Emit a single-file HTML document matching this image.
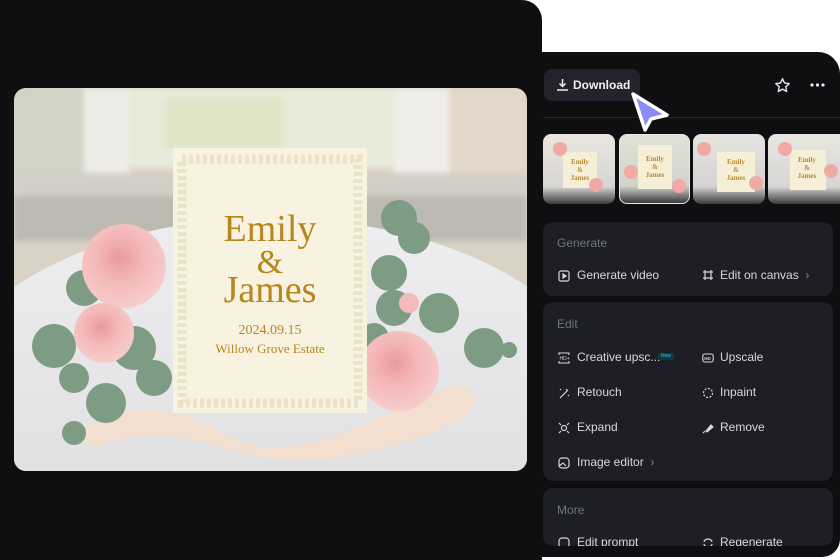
<!DOCTYPE html>
<html><head><meta charset="utf-8"><style>
*{margin:0;padding:0;box-sizing:border-box}
html,body{width:840px;height:560px;overflow:hidden}
body{background:#fff;position:relative;font-family:"Liberation Sans",sans-serif}
.left{position:absolute;left:0;top:0;width:542px;height:560px;background:#0f0f12;border-top-right-radius:20px}
.right{position:absolute;left:530px;top:52px;width:310px;height:505px;background:#0f0f12;border-top-right-radius:22px;border-bottom-right-radius:18px}
.photo{position:absolute;left:14px;top:88px;width:513px;height:383px;border-radius:12px;overflow:hidden}
.dl{position:absolute;left:544px;top:69px;width:96px;height:32px;background:#22232b;border-radius:8px;color:#f0f0f3;font-weight:bold;font-size:12px;line-height:32px;padding-left:29px}
.hr{position:absolute;left:543px;top:117px;width:297px;height:1px;background:#25262d}
.th{position:absolute;top:134px;height:70px;border-radius:8px;overflow:hidden}
.clip{position:absolute;left:543px;top:210px;width:290px;height:336px;overflow:hidden}
.sec{position:absolute;left:0;width:290px;background:#1e1f26;border-radius:10px}
.h{position:absolute;left:14px;font-size:12px;color:#70737d}
.it{position:absolute;font-size:12px;color:#d7d8dd;white-space:nowrap}
.ic{position:absolute;width:12px;height:12px}
</style></head><body>
<div class="left"></div>
<div class="right"></div>
<div class="photo">
<svg width="513" height="383" viewBox="0 0 513 383">
<defs>
<radialGradient id="rose" cx="0.45" cy="0.4" r="0.6"><stop offset="0" stop-color="#e99a9e"/><stop offset="0.5" stop-color="#f4b9b9"/><stop offset="1" stop-color="#f7cccb"/></radialGradient>
<linearGradient id="tab" x1="0" y1="0" x2="0" y2="1"><stop offset="0" stop-color="#eeeef0"/><stop offset="1" stop-color="#d9d9dc"/></linearGradient>
<filter id="bl"><feGaussianBlur stdDeviation="3"/></filter>
</defs>
<rect width="513" height="383" fill="#d9d3c6"/>
<g filter="url(#bl)">
<rect x="0" y="0" width="70" height="90" fill="#cfd4c4"/>
<rect x="70" y="0" width="45" height="95" fill="#eeece6"/>
<rect x="115" y="0" width="265" height="80" fill="#e7ebd9"/>
<rect x="150" y="10" width="120" height="50" fill="#dfe6c8"/>
<rect x="380" y="0" width="55" height="95" fill="#f0eee9"/>
<rect x="435" y="0" width="78" height="140" fill="#e2d8c9"/>
<rect x="0" y="85" width="513" height="25" fill="#d2cfc7"/>
<rect x="0" y="108" width="513" height="45" fill="#bcb9b1"/>
</g>
<ellipse cx="257" cy="330" rx="340" ry="200" fill="url(#tab)"/>
<path d="M60 345 C130 300 180 330 220 350 C280 380 360 330 430 300 C470 290 470 320 440 335 C400 355 320 380 250 370 C200 362 150 330 80 360Z" fill="#f2dfd0"/>
<g fill="#7e9c84">
<circle cx="40" cy="258" r="22"/><circle cx="92" cy="315" r="20"/><circle cx="60" cy="290" r="15"/><circle cx="60" cy="345" r="12"/>
<circle cx="120" cy="260" r="22"/><circle cx="140" cy="290" r="18"/><circle cx="70" cy="200" r="18"/>
<circle cx="385" cy="130" r="18"/><circle cx="400" cy="150" r="16"/><circle cx="375" cy="185" r="18"/><circle cx="380" cy="220" r="18"/>
<circle cx="425" cy="225" r="20"/><circle cx="470" cy="260" r="20"/><circle cx="495" cy="262" r="8"/><circle cx="360" cy="250" r="15"/>
</g>
<circle cx="110" cy="178" r="42" fill="url(#rose)"/>
<circle cx="90" cy="245" r="30" fill="url(#rose)"/>
<circle cx="385" cy="283" r="40" fill="url(#rose)"/>
<circle cx="395" cy="215" r="10" fill="#f2baba"/>
<rect x="159" y="60" width="194" height="265" fill="#f8f3e1"/>
<rect x="168" y="71" width="176" height="244" fill="none" stroke="#ebe2c8" stroke-width="9" stroke-dasharray="4 3"/>
<g font-family="Liberation Serif,serif" fill="#b8861e" text-anchor="middle">
<text x="256" y="153" font-size="38">Emily</text>
<text x="256" y="185" font-size="34">&amp;</text>
<text x="256" y="214" font-size="38">James</text>
<text x="256" y="246" font-size="14">2024.09.15</text>
<text x="256" y="265" font-size="13">Willow Grove Estate</text>
</g>
</svg></div>
<div class="dl">Download</div>
<svg style="position:absolute;left:556px;top:78px" width="13" height="13" viewBox="0 0 13 13" fill="none" stroke="#f0f0f3" stroke-width="1.5"><path d="M6.5 1v7M3.5 5.5l3 3 3-3M1 12h11"/></svg>
<svg style="position:absolute;left:774px;top:77px" width="17" height="17" viewBox="0 0 24 24" fill="none" stroke="#e8e8ec" stroke-width="2" stroke-linejoin="round"><path d="M12 2.5l2.9 6 6.6.8-4.9 4.5 1.3 6.6L12 17.1 6.1 20.4l1.3-6.6L2.5 9.3l6.6-.8z"/></svg>
<svg style="position:absolute;left:810px;top:83px" width="15" height="4"><circle cx="2" cy="2" r="1.6" fill="#e8e8ec"/><circle cx="7.5" cy="2" r="1.6" fill="#e8e8ec"/><circle cx="13" cy="2" r="1.6" fill="#e8e8ec"/></svg>
<div class="hr"></div>
<svg style="position:absolute;left:626px;top:88px" width="48" height="48"><path d="M7 6 L41 27 L25 31 L19 42 Z" fill="#8a8cf8" stroke="#fff" stroke-width="3.5" stroke-linejoin="round"/></svg>
<div class="th" style="left:543px;width:72px;background:linear-gradient(#e9e6df,#d8d6d4 75%,#3a3a3e)"><div style="position:absolute;left:20px;top:18px;width:34px;height:36px;background:#f5efd8"></div><div style="position:absolute;left:10px;top:8px;width:14px;height:14px;border-radius:7px;background:#f1a9a6"></div><div style="position:absolute;left:46px;top:44px;width:14px;height:14px;border-radius:7px;background:#f1a9a6"></div><div style="position:absolute;left:24px;top:24px;color:#c08a2a;font:bold 7px 'Liberation Serif',serif;text-align:center;width:26px">Emily<br>&amp;<br>James</div></div>
<div class="th" style="left:619px;width:71px;border:1.5px solid #e8e8ee;background:linear-gradient(#dfe3d6,#d2d2cc 75%,#3a3a3e)"><div style="position:absolute;left:18px;top:10px;width:34px;height:44px;background:#f5efd8"></div><div style="position:absolute;left:4px;top:30px;width:14px;height:14px;border-radius:7px;background:#f1a9a6"></div><div style="position:absolute;left:52px;top:44px;width:14px;height:14px;border-radius:7px;background:#f1a9a6"></div><div style="position:absolute;left:22px;top:20px;color:#c08a2a;font:bold 7px 'Liberation Serif',serif;text-align:center;width:26px">Emily<br>&amp;<br>James</div></div>
<div class="th" style="left:693px;width:72px;background:linear-gradient(#e6e4e0,#d6d4d2 75%,#3a3a3e)"><div style="position:absolute;left:24px;top:18px;width:38px;height:40px;background:#f5efd8"></div><div style="position:absolute;left:4px;top:8px;width:14px;height:14px;border-radius:7px;background:#f1a9a6"></div><div style="position:absolute;left:56px;top:42px;width:14px;height:14px;border-radius:7px;background:#f1a9a6"></div><div style="position:absolute;left:30px;top:24px;color:#c08a2a;font:bold 7px 'Liberation Serif',serif;text-align:center;width:26px">Emily<br>&amp;<br>James</div></div>
<div class="th" style="left:768px;width:72px;border-radius:8px 0 0 8px;background:linear-gradient(#e8e6e1,#d8d6d4 75%,#3a3a3e)"><div style="position:absolute;left:22px;top:16px;width:36px;height:40px;background:#f5efd8"></div><div style="position:absolute;left:10px;top:8px;width:14px;height:14px;border-radius:7px;background:#f1a9a6"></div><div style="position:absolute;left:56px;top:30px;width:14px;height:14px;border-radius:7px;background:#f1a9a6"></div><div style="position:absolute;left:26px;top:22px;color:#c08a2a;font:bold 7px 'Liberation Serif',serif;text-align:center;width:26px">Emily<br>&amp;<br>James</div></div>
<div class="clip">
<div class="sec" style="top:12px;height:74px">
<div class="h" style="top:14px">Generate</div>
<svg class="ic" style="left:15px;top:48px" viewBox="0 0 12 12" fill="none" stroke="#d7d8dd" stroke-width="1.2"><rect x="1" y="1" width="10" height="10" rx="2"/><path d="M5 4v4l3-2z" fill="#d7d8dd"/></svg>
<div class="it" style="left:34px;top:46px">Generate video</div>
<svg class="ic" style="left:159px;top:47px" viewBox="0 0 12 12" fill="none" stroke="#d7d8dd" stroke-width="1.2"><path d="M3 1v10M9 1v10M1 3h10M1 9h10"/></svg>
<div class="it" style="left:177px;top:46px">Edit on canvas&nbsp; <span style="color:#888">›</span></div>
</div>
<div class="sec" style="top:92px;height:179px">
<div class="h" style="top:15px">Edit</div>
<svg class="ic" style="left:15px;top:50px" viewBox="0 0 12 12" fill="none" stroke="#d7d8dd" stroke-width="1.1"><path d="M1 3V1h10v2M1 9v2h10V9"/><text x="1.5" y="8" font-size="5" fill="#d7d8dd" stroke="none" font-family="Liberation Sans">HD+</text></svg>
<div class="it" style="left:34px;top:48px">Creative upsc...</div>
<div style="position:absolute;left:115px;top:51px;width:16px;height:7px;border-radius:2px;background:#0f3a44;color:#2ac7dc;font-size:5px;line-height:7px;text-align:center">New</div>
<svg class="ic" style="left:159px;top:50px" viewBox="0 0 12 12" fill="none" stroke="#d7d8dd" stroke-width="1.1"><rect x="0.8" y="2" width="10.4" height="8" rx="2"/><text x="2.3" y="8" font-size="4.5" fill="#d7d8dd" stroke="none" font-family="Liberation Sans" font-weight="bold">HD</text></svg>
<div class="it" style="left:177px;top:48px">Upscale</div>
<svg class="ic" style="left:15px;top:85px" viewBox="0 0 12 12" fill="none" stroke="#d7d8dd" stroke-width="1.2"><path d="M2 11l7-7M8 2l2 2M2 2l1 1M10 8l1 1"/></svg>
<div class="it" style="left:34px;top:83px">Retouch</div>
<svg class="ic" style="left:159px;top:85px" viewBox="0 0 12 12" fill="none" stroke="#d7d8dd" stroke-width="1.2" stroke-dasharray="2 1.5"><circle cx="6" cy="6" r="4.5"/></svg>
<div class="it" style="left:177px;top:83px">Inpaint</div>
<svg class="ic" style="left:15px;top:120px" viewBox="0 0 12 12" fill="none" stroke="#d7d8dd" stroke-width="1.2"><circle cx="6" cy="6" r="2.5"/><path d="M1 1l2 2M11 1L9 3M1 11l2-2M11 11L9 9"/></svg>
<div class="it" style="left:34px;top:118px">Expand</div>
<svg class="ic" style="left:159px;top:120px" viewBox="0 0 12 12" fill="none" stroke="#d7d8dd" stroke-width="1.2"><path d="M4 9l5-6 2 2-6 5z" fill="#d7d8dd"/><path d="M1 11l2-2"/></svg>
<div class="it" style="left:177px;top:118px">Remove</div>
<svg class="ic" style="left:15px;top:155px" viewBox="0 0 12 12" fill="none" stroke="#d7d8dd" stroke-width="1.2"><rect x="1" y="1" width="10" height="10" rx="3"/><path d="M1 9l4-3 3 3" /></svg>
<div class="it" style="left:34px;top:153px">Image editor&nbsp; <span style="color:#888">›</span></div>
</div>
<div class="sec" style="top:278px;height:58px">
<div class="h" style="top:15px">More</div>
<svg class="ic" style="left:15px;top:49px" viewBox="0 0 12 12" fill="none" stroke="#d7d8dd" stroke-width="1.2"><rect x="1" y="1" width="10" height="10" rx="3"/></svg>
<div class="it" style="left:34px;top:47px">Edit prompt</div>
<svg class="ic" style="left:159px;top:49px" viewBox="0 0 12 12" fill="none" stroke="#d7d8dd" stroke-width="1.2"><path d="M2 5a4 3 0 0 1 8 0M10 7a4 3 0 0 1-8 0"/></svg>
<div class="it" style="left:177px;top:47px">Regenerate</div>
</div>
</div>
</body></html>
